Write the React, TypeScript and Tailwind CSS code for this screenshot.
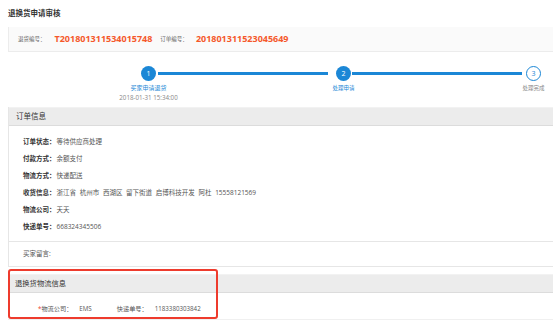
import React from "react";

const FONT = { fontFamily: '"Open Sans", "Noto Sans CJK SC", sans-serif' };

function Row({ label, value }: { label: string; value: string }) {
  return (
    <div className="flex h-[17px] items-center text-[6.5px] leading-[17px] whitespace-nowrap">
      <span className="font-bold text-[#333]">{label}</span>
      <span className="ml-[1px] text-[#555] [word-spacing:2px]">{value}</span>
    </div>
  );
}

function Circle({ n, active }: { n: number; active: boolean }) {
  return active ? (
    <div className="flex h-[15px] w-[15px] shrink-0 items-center justify-center rounded-full bg-[#1b87d6] text-[7px] leading-none text-white">
      {n}
    </div>
  ) : (
    <div className="flex h-[15px] w-[15px] shrink-0 items-center justify-center rounded-full border-[1.5px] border-[#1b87d6] bg-white text-[7px] leading-none text-[#1b87d6]">
      {n}
    </div>
  );
}

export default function App() {
  return (
    <div className="relative h-[323px] w-full overflow-hidden bg-white" style={FONT}>
      {/* title */}
      <div className="flex h-[27px] items-center pl-[8px] text-[7.5px] font-bold text-[#333]">
        退换货申请审核
      </div>

      {/* info box */}
      <div className="ml-[8px] flex h-[25px] items-center border-b border-l border-[#ececec] bg-[#fafafa] pl-[9px] whitespace-nowrap">
        <span className="text-[5.5px] text-[#666]">退货编号：</span>
        <span className="ml-[9px] text-[9px] font-bold text-[#f5582a]">T201801311534015748</span>
        <span className="ml-[8px] text-[5.5px] text-[#666]">订单编号：</span>
        <span className="ml-[8px] text-[9px] font-bold text-[#f5582a]">201801311523045649</span>
      </div>

      {/* steps */}
      <div className="flex h-[55px] items-start pt-[14px] pl-[141px] pr-[12px]">
        <div className="relative">
          <Circle n={1} active />
          <div className="absolute left-1/2 top-[17px] flex -translate-x-1/2 flex-col items-center whitespace-nowrap">
            <span className="text-[6px] leading-[10px] text-[#1b87d6]">买家申请退货</span>
            <span className="text-[6.2px] leading-[10px] text-[#888]">2018-01-31 15:34:00</span>
          </div>
        </div>
        <div className="mt-[6px] ml-[2px] mr-[8px] h-[2.5px] flex-1 bg-[#1b87d6]" />
        <div className="relative">
          <Circle n={2} active />
          <div className="absolute left-1/2 top-[17px] -translate-x-1/2 whitespace-nowrap text-[5.5px] leading-[10px] text-[#1b87d6]">
            处理申请
          </div>
        </div>
        <div className="mt-[6px] ml-[1px] mr-[4px] h-[2.5px] flex-1 bg-[#1b87d6]" />
        <div className="relative">
          <Circle n={3} active={false} />
          <div className="absolute left-1/2 top-[17px] -translate-x-1/2 whitespace-nowrap text-[5.5px] leading-[10px] text-[#888]">
            处理完成
          </div>
        </div>
      </div>

      {/* panel 1 */}
      <div className="ml-[8px] border-b border-l border-[#e6e6e6]">
        <div className="flex h-[19px] items-center border-t border-b border-t-[#f2f2f2] border-b-[#dcdcdc] bg-[#ececec] pl-[7px] text-[7.5px] text-[#333]">
          订单信息
        </div>
        <div className="pl-[14px] pt-[7px] pb-[6px]">
          <Row label="订单状态：" value="等待供应商处理" />
          <Row label="付款方式：" value="余额支付" />
          <Row label="物流方式：" value="快递配送" />
          <Row label="收货信息：" value="浙江省 杭州市 西湖区 留下街道 启博科技开发 阿杜 15558121569" />
          <Row label="物流公司：" value="天天" />
          <Row label="快递单号：" value="668324345506" />
        </div>
        <div className="flex h-[25px] items-center border-t border-[#e6e6e6] pl-[14px] text-[6.5px] text-[#555]">
          买家留言:
        </div>
      </div>

      {/* panel 2 */}
      <div className="mt-[7px] ml-[8px] border-b border-[#f0f0f0]">
        <div className="flex h-[19px] items-center border-t border-b border-t-[#f2f2f2] border-b-[#dcdcdc] bg-[#ececec] pl-[7px] text-[7.3px] text-[#333]">
          退换货物流信息
        </div>
        <div className="flex h-[26px] items-center pl-[30px] pt-[5px] text-[6.2px] text-[#555] whitespace-nowrap">
          <span className="text-[#ee3b2d]">*</span>
          <span>物流公司：</span>
          <span className="ml-[7px]">EMS</span>
          <span className="ml-[25px]">快递单号：</span>
          <span className="ml-[7px]">1183380303842</span>
        </div>
      </div>

      {/* red annotation box */}
      <div className="absolute left-[8px] top-[269px] h-[50px] w-[210px] rounded-[3px] border-2 border-[#ee3b2d]" />
    </div>
  );
}
